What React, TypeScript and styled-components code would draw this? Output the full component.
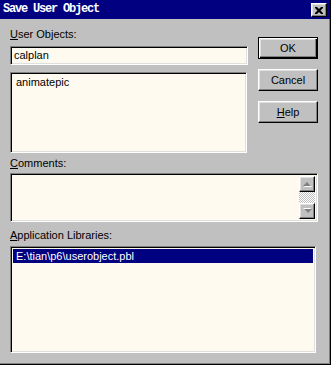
import React from 'react';
import styled, { createGlobalStyle, css } from 'styled-components';

const GlobalStyle = createGlobalStyle`
  html, body {
    margin: 0;
    padding: 0;
    background: #c0c0c0;
  }
  body {
    font-family: "Liberation Sans", Arial, sans-serif;
    font-size: 11px;
    color: #000;
  }
`;

const FIELD_BG = '#fffaf0';

const sunken = css`
  box-sizing: border-box;
  border: 1px solid;
  border-color: #808080 #ffffff #ffffff #808080;
  box-shadow: inset 1px 1px #000000, inset -1px -1px #dfdfdf;
  background: ${FIELD_BG};
`;

const raised = css`
  box-sizing: border-box;
  background: #c0c0c0;
  border: 1px solid;
  border-color: #ffffff #000000 #000000 #ffffff;
  box-shadow: inset -1px -1px #808080, inset 1px 1px #dfdfdf;
`;

const Window = styled.div`
  box-sizing: border-box;
  width: 331px;
  height: 365px;
  background: #c0c0c0;
  display: flex;
  flex-direction: column;
  border-right: 1px solid #000;
  border-bottom: 1px solid #000;
  box-shadow: inset -1px -1px #808080;
`;

const TitleBar = styled.div`
  height: 19px;
  flex: none;
  background: #000080;
  display: flex;
  align-items: center;
  justify-content: space-between;
  padding: 0 3px 0 3px;
`;

const Title = styled.span`
  font-family: "Liberation Mono", "DejaVu Sans Mono", monospace;
  font-weight: bold;
  font-size: 12px;
  letter-spacing: -1.2px;
  color: #ffffff;
  line-height: 19px;
`;

const CloseButton = styled.div`
  ${raised};
  width: 16px;
  height: 14px;
  display: grid;
  place-items: center;
  margin-top: 1px;
`;

const Body = styled.div`
  flex: 1;
  display: flex;
  flex-direction: column;
  padding: 9px 12px 0 10px;
`;

const TopSection = styled.div`
  display: flex;
  gap: 10px;
`;

const LeftColumn = styled.div`
  width: 238px;
  display: flex;
  flex-direction: column;
`;

const ButtonColumn = styled.div`
  width: 60px;
  display: flex;
  flex-direction: column;
  gap: 10px;
  padding-top: 9px;
`;

const Label = styled.div<{ $gap: number; $top?: number }>`
  line-height: 13px;
  height: 13px;
  margin-top: ${p => p.$top ?? 0}px;
  margin-bottom: ${p => p.$gap}px;
  white-space: nowrap;
`;

const TextInput = styled.div`
  ${sunken};
  height: 19px;
  line-height: 17px;
  padding-left: 3px;
  margin-bottom: 7px;
`;

const ListBox = styled.div<{ $width: number; $height: number }>`
  ${sunken};
  width: ${p => p.$width}px;
  height: ${p => p.$height}px;
  padding: 2px;
  display: flex;
  flex-direction: column;
`;

const ListItem = styled.div<{ $selected?: boolean }>`
  height: 14px;
  line-height: 14px;
  padding-left: 3px;
  white-space: nowrap;
  background: ${p => (p.$selected ? '#000080' : 'transparent')};
  color: ${p => (p.$selected ? '#ffffff' : '#000000')};
`;

const Button = styled.div<{ $default?: boolean }>`
  ${raised};
  height: 22px;
  display: grid;
  place-items: center;
  line-height: 13px;
  ${p =>
    p.$default &&
    css`
      border-color: #000;
      box-shadow: inset 1px 1px #ffffff, inset -1px -1px #000000,
        inset -2px -2px #808080, inset 2px 2px #dfdfdf;
    `}
`;

const MemoBox = styled.div`
  ${sunken};
  width: 308px;
  height: 49px;
  padding: 2px;
  display: flex;
  justify-content: flex-end;
`;

const ScrollBar = styled.div`
  flex: none;
  width: 16px;
  display: flex;
  flex-direction: column;
  justify-content: space-between;
  background-color: #dfdfdf;
  background-image: conic-gradient(
    #c0c0c0 25%,
    #ffffff 0 50%,
    #c0c0c0 0 75%,
    #ffffff 0
  );
  background-size: 2px 2px;
`;

const ScrollButton = styled.div`
  ${raised};
  width: 16px;
  height: 16px;
  display: grid;
  place-items: center;
`;

const Arrow = ({ down }: { down?: boolean }) => (
  <svg width="9" height="6" viewBox="0 0 9 6">
    <g transform={down ? 'rotate(180 4.5 3)' : undefined}>
      <polygon points="5,2 9,6 1,6" fill="#ffffff" />
      <polygon points="4,1 8,5 0,5" fill="#808080" />
    </g>
  </svg>
);

export default function App() {
  return (
    <>
      <GlobalStyle />
      <Window>
        <TitleBar>
          <Title>Save User Object</Title>
          <CloseButton>
            <svg width="8" height="7" viewBox="0 0 8 7">
              <path
                d="M0 0h2l2 2 2-2h2v1l-2.5 2.5L8 6v1H6L4 5 2 7H0V6l2.5-2.5L0 1z"
                fill="#000"
              />
            </svg>
          </CloseButton>
        </TitleBar>
        <Body>
          <TopSection>
            <LeftColumn>
              <Label $gap={5}>
                <u>U</u>ser Objects:
              </Label>
              <TextInput>calplan</TextInput>
              <ListBox $width={237} $height={81}>
                <ListItem>animatepic</ListItem>
              </ListBox>
            </LeftColumn>
            <ButtonColumn>
              <Button $default>OK</Button>
              <Button>Cancel</Button>
              <Button>
                <span>
                  <u>H</u>elp
                </span>
              </Button>
            </ButtonColumn>
          </TopSection>
          <Label $top={4} $gap={3}>
            <u>C</u>omments:
          </Label>
          <MemoBox>
            <ScrollBar>
              <ScrollButton>
                <Arrow />
              </ScrollButton>
              <ScrollButton>
                <Arrow down />
              </ScrollButton>
            </ScrollBar>
          </MemoBox>
          <Label $top={7} $gap={4}>
            <u>A</u>pplication Libraries:
          </Label>
          <ListBox $width={306} $height={107}>
            <ListItem $selected>E:\tian\p6\userobject.pbl</ListItem>
          </ListBox>
        </Body>
      </Window>
    </>
  );
}
